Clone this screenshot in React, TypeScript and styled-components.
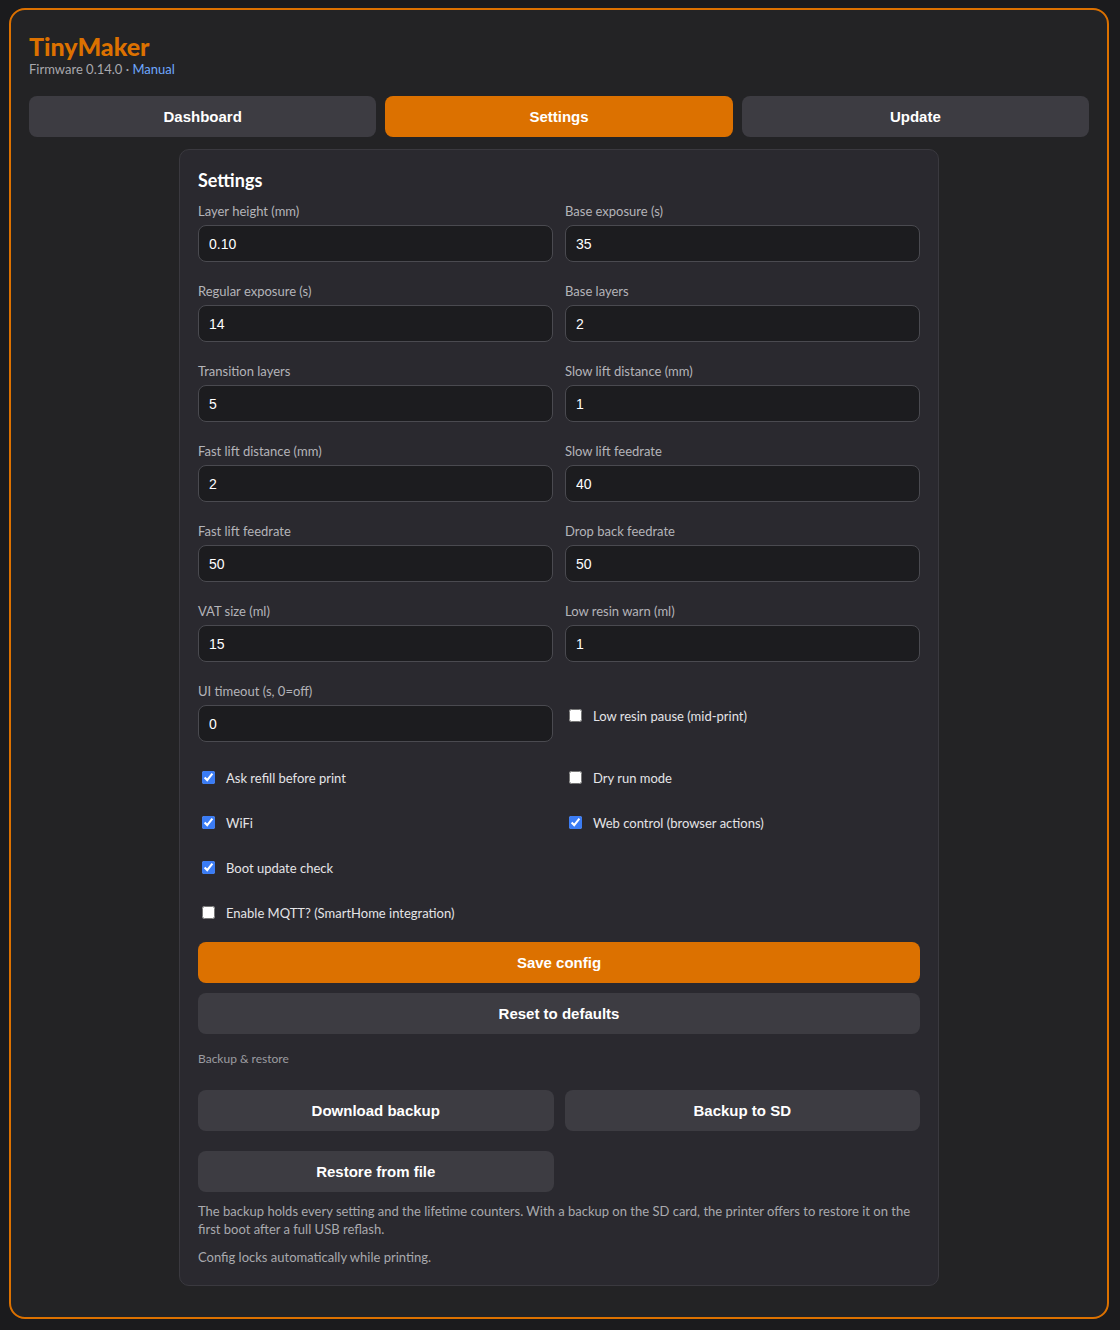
import styled, { createGlobalStyle } from "styled-components";

const GlobalStyle = createGlobalStyle`
  body {
    margin: 0;
    padding: 8px 0;
    background: #1b1b1d;
    font-family: Lato, "Noto Sans", sans-serif;
    color: #e6e6e8;
  }
`;

const FIELDS = [
  ["Layer height (mm)", "0.10"],
  ["Base exposure (s)", "35"],
  ["Regular exposure (s)", "14"],
  ["Base layers", "2"],
  ["Transition layers", "5"],
  ["Slow lift distance (mm)", "1"],
  ["Fast lift distance (mm)", "2"],
  ["Slow lift feedrate", "40"],
  ["Fast lift feedrate", "50"],
  ["Drop back feedrate", "50"],
  ["VAT size (ml)", "15"],
  ["Low resin warn (ml)", "1"],
  ["UI timeout (s, 0=off)", "0"],
];

const CHECKS: [string, boolean][] = [
  ["Ask refill before print", true],
  ["Dry run mode", false],
  ["WiFi", true],
  ["Web control (browser actions)", true],
  ["Boot update check", true],
];

export default function App() {
  return (
    <>
      <GlobalStyle />
      <SCCard>
        <SCBrand>
          <h1>TinyMaker</h1>
          <span>
            Firmware 0.14.0 · <a href="#manual">Manual</a>
          </span>
        </SCBrand>

        <SCTabs>
          <SCTab>Dashboard</SCTab>
          <SCTab $active>Settings</SCTab>
          <SCTab>Update</SCTab>
        </SCTabs>

        <SCPanel>
          <h2>Settings</h2>

          <SCFieldGrid>
            {FIELDS.map(([label, value]) => (
              <SCField key={label}>
                <span>{label}</span>
                <SCInput defaultValue={value} />
              </SCField>
            ))}
            <SCCheck $inline>
              <input type="checkbox" />
              Low resin pause (mid-print)
            </SCCheck>
          </SCFieldGrid>

          <SCCheckGrid>
            {CHECKS.map(([label, on]) => (
              <SCCheck key={label}>
                <input type="checkbox" defaultChecked={on} />
                {label}
              </SCCheck>
            ))}
            <span />
            <SCCheck>
              <input type="checkbox" />
              Enable MQTT? (SmartHome integration)
            </SCCheck>
          </SCCheckGrid>

          <SCButton $primary>Save config</SCButton>
          <SCButton>Reset to defaults</SCButton>

          <SCSubtitle>Backup &amp; restore</SCSubtitle>

          <SCButtonGrid>
            <SCButton>Download backup</SCButton>
            <SCButton>Backup to SD</SCButton>
            <SCButton>Restore from file</SCButton>
          </SCButtonGrid>

          <SCNote>
            The backup holds every setting and the lifetime counters. With a
            backup on the SD card, the printer offers to restore it on the first
            boot after a full USB reflash.
          </SCNote>
          <SCNote>Config locks automatically while printing.</SCNote>
        </SCPanel>
      </SCCard>
    </>
  );
}

const SCCard = styled.div`
  max-width: 1100px;
  height: 1311px;
  margin: 0 11px 0 9px;
  box-sizing: border-box;
  border: 2px solid #dc7100;
  border-radius: 16px;
  background: #232325;
  padding: 21px 18px 32px;
`;

const SCBrand = styled.div`
  margin-bottom: 19px;

  h1 {
    margin: 0;
    font-size: 25px;
    line-height: 30px;
    font-weight: 900;
    color: #dc7100;
  }

  span {
    display: block;
    font-size: 13px;
    line-height: 16px;
    color: #a8a8ad;
  }

  a {
    color: #6ea8fe;
    text-decoration: none;
  }
`;

const SCTabs = styled.nav`
  display: grid;
  grid-template-columns: repeat(3, 1fr);
  gap: 9px;
  margin-bottom: 12px;
`;

const SCTab = styled.button<{ $active?: boolean }>`
  height: 41px;
  border: none;
  border-radius: 8px;
  background: ${(p) => (p.$active ? "#dc7100" : "#3d3c42")};
  color: #fff;
  font-family: "Liberation Sans", Arial, sans-serif;
  font-size: 15px;
  font-weight: 700;
  cursor: pointer;
`;

const SCPanel = styled.section`
  width: 760px;
  margin: 0 auto;
  box-sizing: border-box;
  border: 1px solid #3a393f;
  border-radius: 10px;
  background: #2a292f;
  padding: 19px 18px 19px;
  display: flex;
  flex-direction: column;

  h2 {
    margin: 0 0 12px;
    font-size: 18px;
    line-height: 22px;
    font-weight: 700;
    color: #fff;
  }
`;

const SCFieldGrid = styled.div`
  display: grid;
  grid-template-columns: 1fr 1fr;
  column-gap: 12px;
  row-gap: 21px;
`;

const SCField = styled.label`
  display: flex;
  flex-direction: column;
  gap: 5px;

  > span {
    font-size: 13px;
    line-height: 17px;
    color: #b4b4b9;
  }
`;

const SCInput = styled.input`
  height: 37px;
  box-sizing: border-box;
  border: 1px solid #4a4a50;
  border-radius: 8px;
  background: #1c1c1f;
  color: #fff;
  padding: 0 10px;
  font-family: "Liberation Sans", Arial, sans-serif;
  font-size: 14px;
  outline: none;
`;

const SCCheckGrid = styled.div`
  display: grid;
  grid-template-columns: 1fr 1fr;
  column-gap: 12px;
  row-gap: 20px;
  margin: 23px 0 17px;
`;

const SCCheck = styled.label<{ $inline?: boolean }>`
  display: flex;
  align-items: center;
  gap: 8px;
  height: 25px;
  font-size: 13px;
  color: #e4e4e7;
  align-self: ${(p) => (p.$inline ? "end" : "auto")};
  margin-bottom: ${(p) => (p.$inline ? "14px" : "0")};

  input {
    width: 13px;
    height: 13px;
    margin: 3px 3px 3px 4px;
    accent-color: #3b7cf4;
  }
`;

const SCButton = styled.button<{ $primary?: boolean }>`
  height: 41px;
  border: none;
  border-radius: 8px;
  background: ${(p) => (p.$primary ? "#dc7100" : "#3d3c42")};
  color: #fff;
  font-family: "Liberation Sans", Arial, sans-serif;
  font-size: 15px;
  font-weight: 700;
  cursor: pointer;

  & + & {
    margin-top: 10px;
  }
`;

const SCSubtitle = styled.div`
  margin: 17px 0 23px;
  font-size: 12px;
  line-height: 16px;
  color: #9c9ca1;
`;

const SCButtonGrid = styled.div`
  display: grid;
  grid-template-columns: 1fr 1fr;
  column-gap: 11px;
  row-gap: 20px;

  ${SCButton} + ${SCButton} {
    margin-top: 0;
  }
`;

const SCNote = styled.p`
  margin: 10px 0 0;
  font-size: 13px;
  line-height: 18px;
  color: #a9a9ae;
`;
